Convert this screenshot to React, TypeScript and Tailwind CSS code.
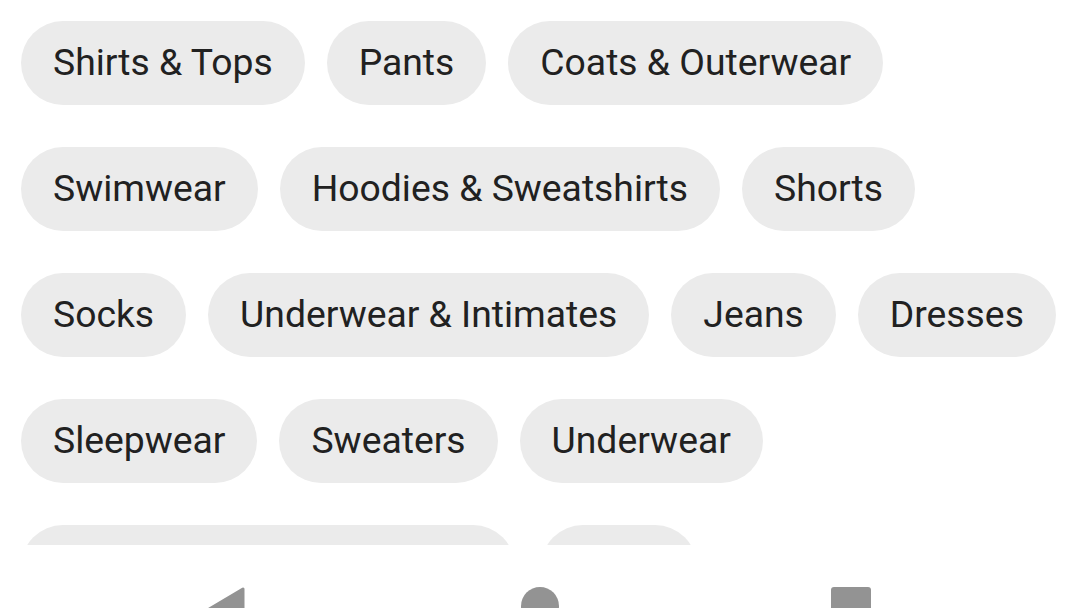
import React from "react";

const rows: string[][] = [
  ["Shirts & Tops", "Pants", "Coats & Outerwear"],
  ["Swimwear", "Hoodies & Sweatshirts", "Shorts"],
  ["Socks", "Underwear & Intimates", "Jeans", "Dresses"],
  ["Sleepwear", "Sweaters", "Underwear"],
];

function Chip({ label }: { label: string }) {
  return (
    <div className="h-[84px] shrink-0 rounded-full bg-[#ebebeb] px-[32px] flex items-center text-[37.3px] leading-none text-[#212121] whitespace-nowrap">
      {label}
    </div>
  );
}

export default function App() {
  return (
    <div
      className="w-[1080px] h-[608px] overflow-hidden bg-white flex flex-col"
      style={{ fontFamily: "Roboto, 'Noto Sans', sans-serif" }}
    >
      {/* Category chips */}
      <div className="h-[545px] shrink-0 overflow-hidden pt-[21px] pl-[21px] flex flex-col gap-[42px]">
        {rows.map((row, i) => (
          <div key={i} className="flex gap-[22px]">
            {row.map((c) => (
              <Chip key={c} label={c} />
            ))}
          </div>
        ))}
        {/* next row, scrolled under the nav bar */}
        <div className="flex gap-[26px]">
          <div className="h-[84px] w-[494px] shrink-0 rounded-full bg-[#ebebeb]" />
          <div className="h-[84px] w-[156px] shrink-0 rounded-full bg-[#ebebeb]" />
        </div>
      </div>

      {/* Nav bar */}
      <div className="flex items-start pt-[42px] pl-[203px]">
        <svg width="42" height="48" viewBox="0 0 42 48" className="shrink-0">
          <polygon
            points="40,2 40,46 3,24"
            fill="#939393"
            stroke="#939393"
            strokeWidth="3"
            strokeLinejoin="round"
          />
        </svg>
        <div className="ml-[276px] w-[38px] h-[38px] rounded-full bg-[#939393] shrink-0" />
        <div className="ml-[272px] w-[40px] h-[40px] rounded-[3px] bg-[#939393] shrink-0" />
      </div>
    </div>
  );
}
